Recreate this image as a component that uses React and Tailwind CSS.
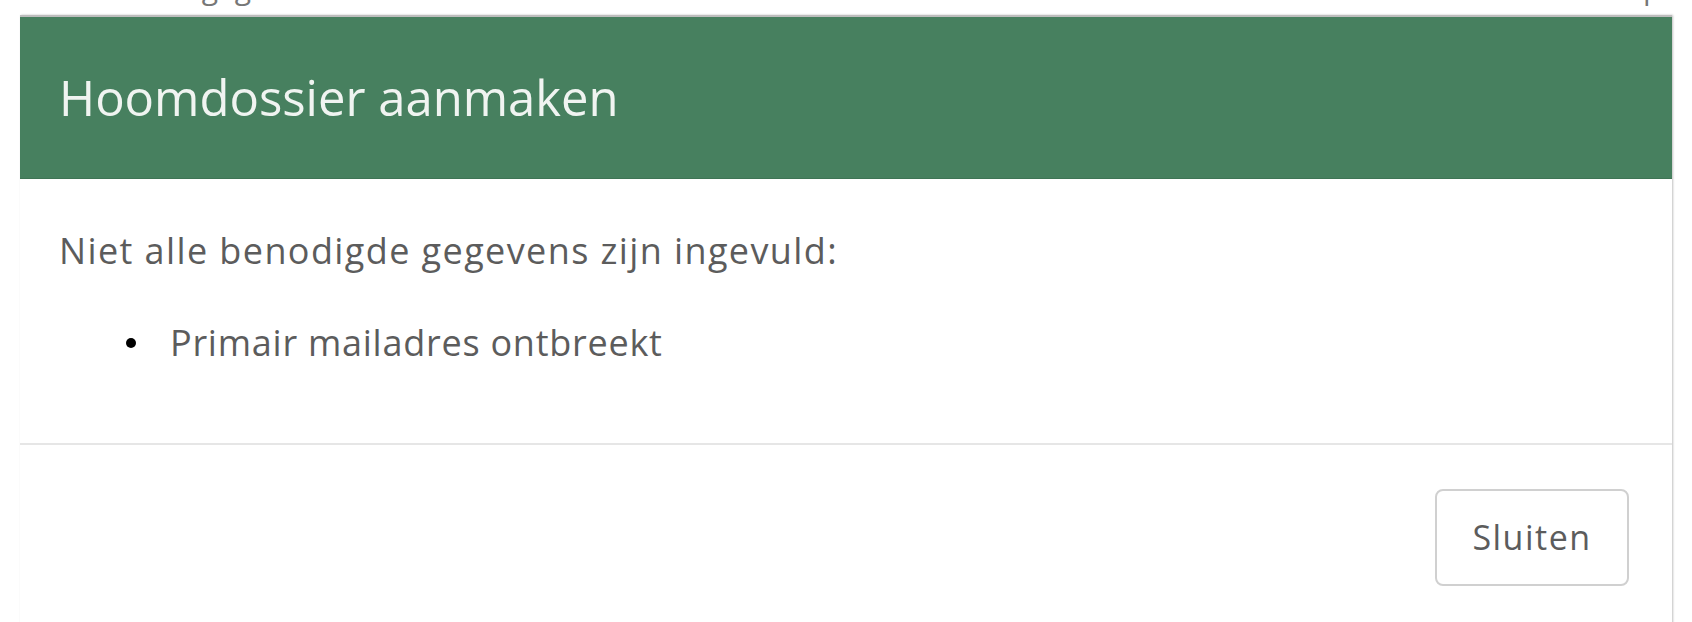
export default function App() {
  return (
    <div className="w-[1692px] h-[622px] bg-white overflow-hidden" style={{ fontFamily: '"Open Sans", Lato, sans-serif' }}>
      <div className="h-[15px] overflow-hidden">
        <div className="flex justify-between pl-[130px] pr-[20px] text-[30px] text-[#777] leading-none mt-[-27px]">
          <span>Klantgegevens</span>
          <span>Opt</span>
        </div>
      </div>
      <div className="mx-[20px] border-t-[2px] border-[#bdbdbd] shadow-[1px_0_2px_rgba(0,0,0,0.25)]">
        <div className="h-[162px] bg-[#47805f] flex items-center px-[39px] border-b border-[#3f7455]">
          <h1 className="text-[49px] text-[#f0f4f1] font-normal leading-none">Hoomdossier aanmaken</h1>
        </div>
        <div className="px-[39px] pt-[52px] pb-[80px] text-[36px] text-[#5c5c5c]">
          <p className="leading-[40px] tracking-[1.4px]">Niet alle benodigde gegevens zijn ingevuld:</p>
          <div className="mt-[52px] flex items-center leading-[40px]">
            <span className="w-[10px] h-[10px] rounded-full bg-black ml-[67px] mr-[34px]" />
            <span className="tracking-[0.75px]">Primair mailadres ontbreekt</span>
          </div>
        </div>
        <div className="border-t-[2px] border-[#e6e6e6] flex justify-end pr-[43px] pt-[44px] pb-[60px]">
          <button className="w-[194px] h-[97px] border-[2px] border-[#d0d0d0] rounded-[8px] text-[34px] tracking-[1.5px] text-[#5c5c5c] bg-white">Sluiten</button>
        </div>
      </div>
    </div>
  );
}
